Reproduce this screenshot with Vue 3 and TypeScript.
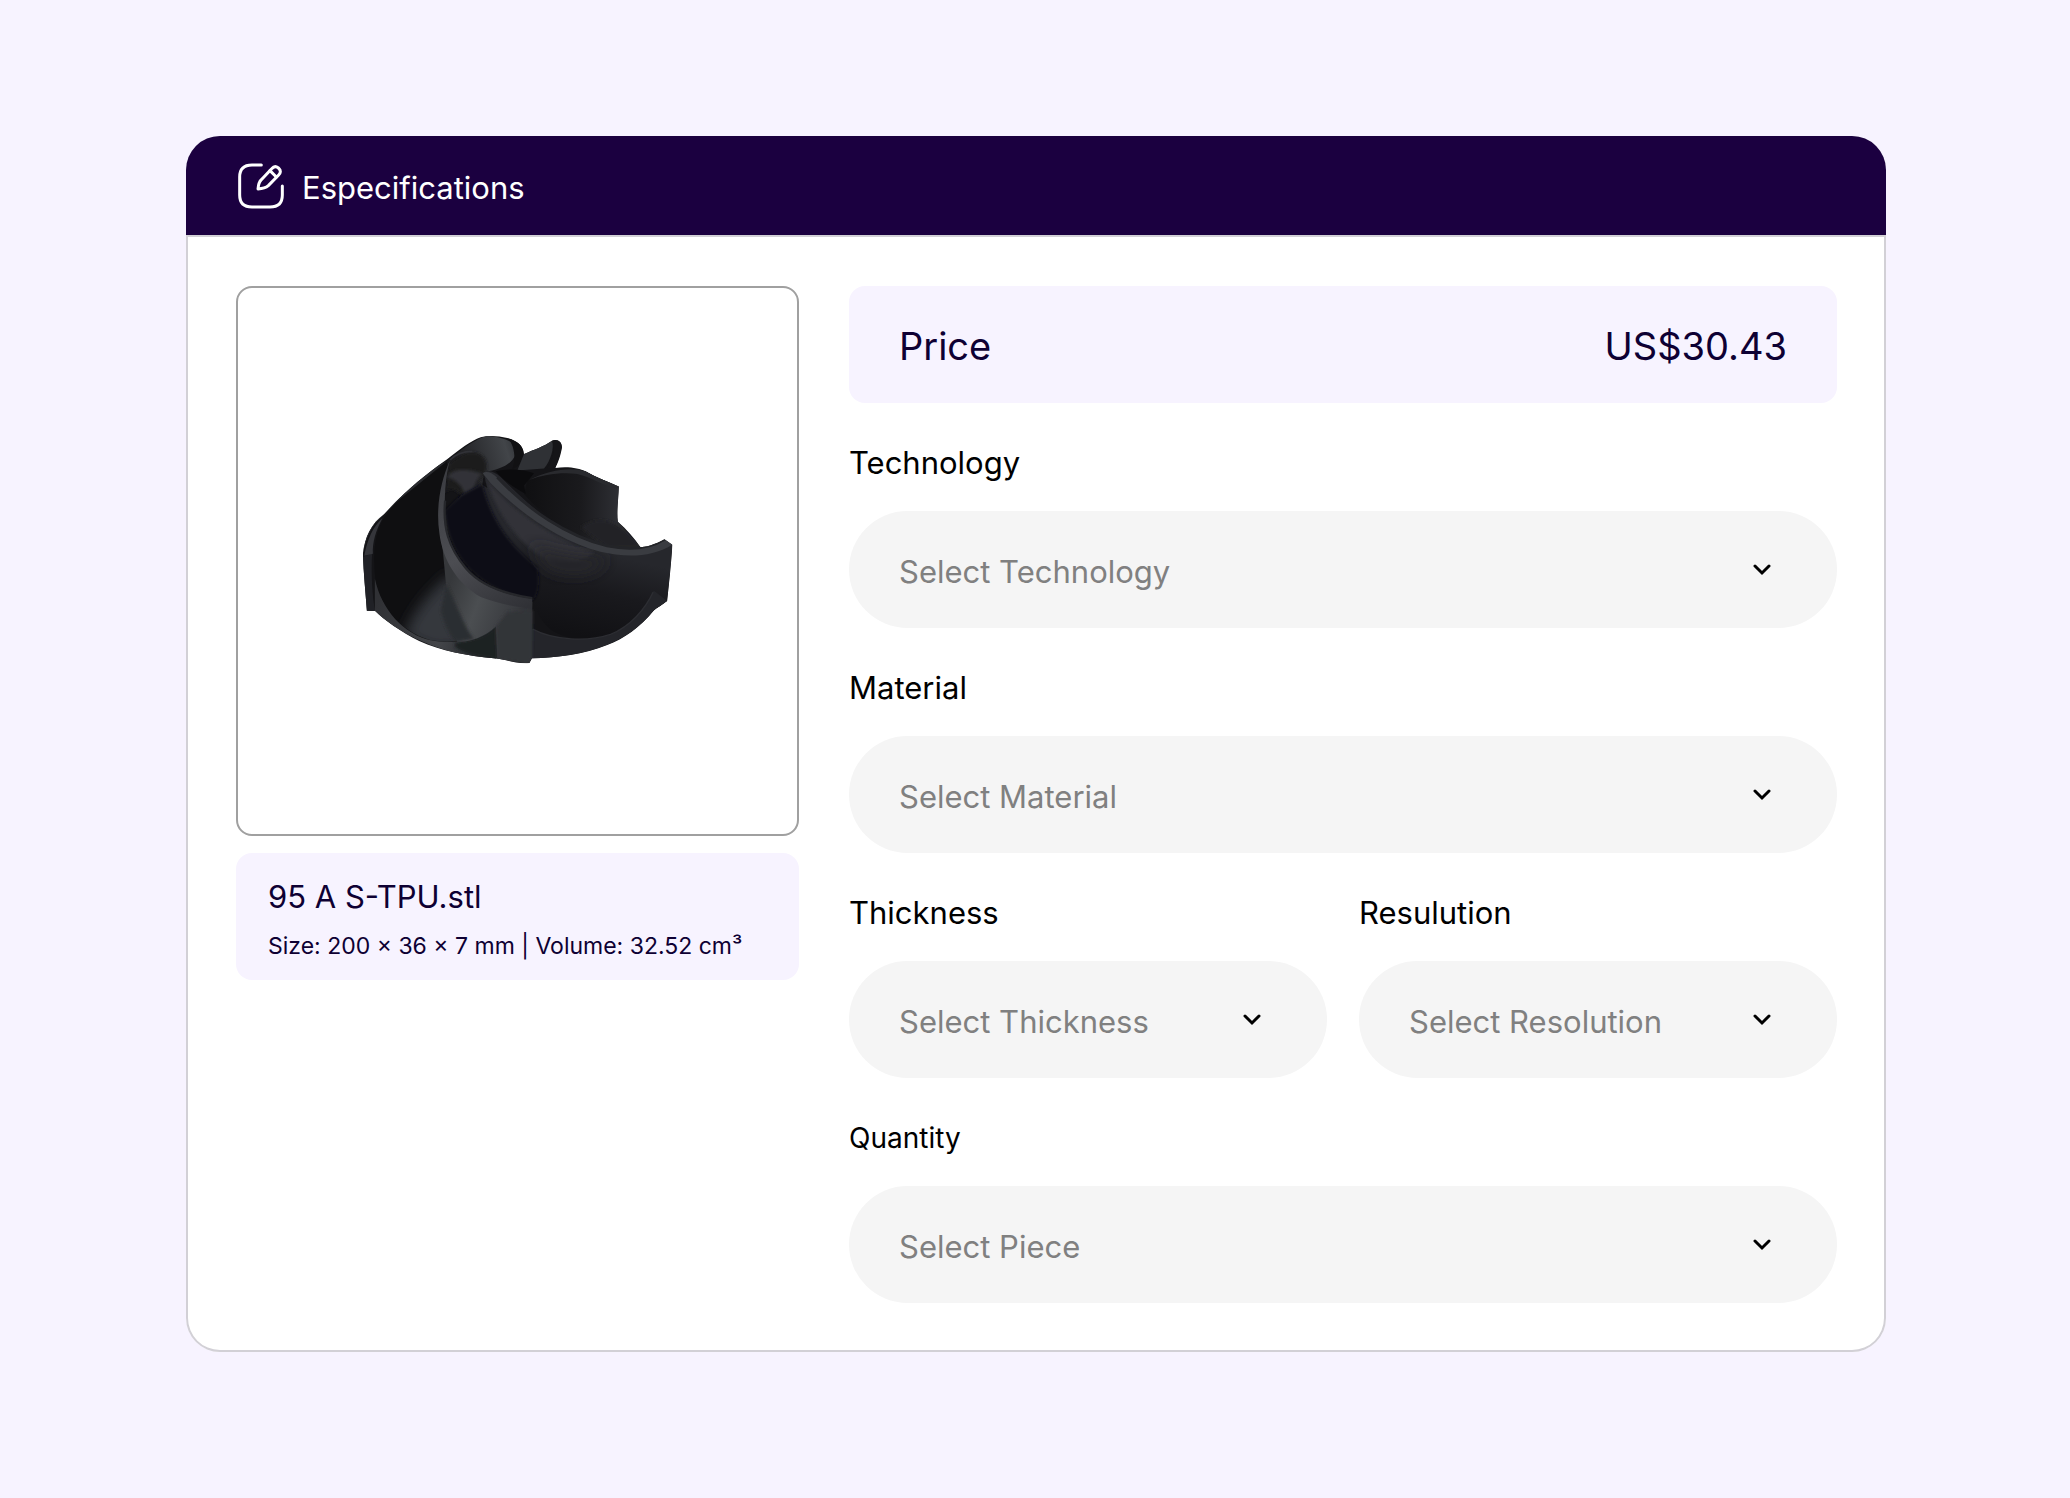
<script setup lang="ts">
import { reactive } from 'vue'

interface Field {
  id: string
  label: string
  placeholder: string
  options: string[]
  half?: boolean
  compact?: boolean
}

const fields: Field[] = [
  { id: 'technology', label: 'Technology', placeholder: 'Select Technology', options: ['FDM', 'SLA', 'SLS'] },
  { id: 'material', label: 'Material', placeholder: 'Select Material', options: ['TPU', 'PLA', 'Nylon'] },
  { id: 'thickness', label: 'Thickness', placeholder: 'Select Thickness', options: ['0.1 mm', '0.2 mm'], half: true },
  { id: 'resolution', label: 'Resulution', placeholder: 'Select Resolution', options: ['Standard', 'High'], half: true },
  { id: 'quantity', label: 'Quantity', placeholder: 'Select Piece', options: ['1', '2', '5', '10'], compact: true },
]

const values = reactive<Record<string, string>>({
  technology: '',
  material: '',
  thickness: '',
  resolution: '',
  quantity: '',
})
</script>

<template>
  <main class="page">
    <section class="card">
      <header class="card-header">
        <svg class="edit-icon" viewBox="0 0 138 138" aria-hidden="true">
          <g fill="none" stroke="currentColor" stroke-width="9" stroke-linecap="round" stroke-linejoin="round">
            <path d="M70 6H42C18 6 5 18 5 42V96C5 120 18 132 42 132H96C120 132 133 120 133 96V69" />
            <path d="M60 78C61 65 64 56 70 50L101 17C107 10 114 9 120 14L123 17C129 23 128 30 122 36L91 68C84 74 74 77 60 78Z" />
            <path d="M96 23L115 42" />
          </g>
        </svg>
        <h1 class="card-title">Especifications</h1>
      </header>

      <div class="card-body">
        <aside class="model">
          <div class="preview">
            <svg class="impeller" viewBox="64 70 936 694" role="img" aria-label="Black impeller part">
              <defs>
                <linearGradient id="wall" x1="310" y1="560" x2="580" y2="660" gradientUnits="userSpaceOnUse">
                  <stop offset="0" stop-color="#36383b" />
                  <stop offset=".35" stop-color="#4b4e51" />
                  <stop offset=".7" stop-color="#3b3d41" />
                  <stop offset="1" stop-color="#2b2c30" />
                </linearGradient>
                <linearGradient id="rim" x1="320" y1="150" x2="560" y2="590" gradientUnits="userSpaceOnUse">
                  <stop offset="0" stop-color="#3a3b40" />
                  <stop offset=".55" stop-color="#4c4d52" />
                  <stop offset="1" stop-color="#303136" />
                </linearGradient>
                <linearGradient id="top" x1="350" y1="180" x2="540" y2="120" gradientUnits="userSpaceOnUse">
                  <stop offset="0" stop-color="#1d1d20" />
                  <stop offset=".8" stop-color="#424549" />
                  <stop offset="1" stop-color="#303236" />
                </linearGradient>
                <linearGradient id="pocket" x1="800" y1="430" x2="740" y2="680" gradientUnits="userSpaceOnUse">
                  <stop offset="0" stop-color="#26272c" />
                  <stop offset=".45" stop-color="#19191d" />
                  <stop offset="1" stop-color="#111114" />
                </linearGradient>
                <linearGradient id="back" x1="560" y1="270" x2="830" y2="280" gradientUnits="userSpaceOnUse">
                  <stop offset="0" stop-color="#101012" />
                  <stop offset=".6" stop-color="#1a1a1d" />
                  <stop offset="1" stop-color="#2d2e33" />
                </linearGradient>
                <linearGradient id="base" x1="100" y1="600" x2="470" y2="730" gradientUnits="userSpaceOnUse">
                  <stop offset="0" stop-color="#303135" />
                  <stop offset=".55" stop-color="#434549" />
                  <stop offset="1" stop-color="#1e1f23" />
                </linearGradient>
                <filter id="soft" x="-30%" y="-30%" width="160%" height="160%">
                  <feGaussianBlur stdDeviation="20" />
                </filter>
                <filter id="edge" x="-10%" y="-10%" width="120%" height="120%">
                  <feGaussianBlur stdDeviation="5" />
                </filter>
                <clipPath id="body">
                  <path d="M66 430C72 380 90 340 130 310C200 235 250 195 320 145C360 115 390 90 420 80C440 74 470 74 500 82C530 90 548 104 550 130C580 116 610 108 634 90C652 84 664 94 664 110C660 140 650 160 644 172C680 166 715 172 735 182C765 200 800 212 835 228C834 265 828 300 832 334C858 356 880 382 900 410C930 408 955 395 972 386L996 403C992 460 986 520 980 572C965 584 950 592 940 600C900 650 850 685 800 704C730 732 650 742 574 744L566 758C530 762 500 748 460 744C380 736 300 722 235 692C180 664 130 630 103 602L78 601C74 545 68 490 66 430Z" />
                </clipPath>
                <clipPath id="bowl">
                  <path d="M320 150C250 195 190 245 130 320C100 370 95 430 104 510C118 580 170 660 270 690C340 702 410 690 465 650L400 520L300 400Z" />
                </clipPath>
              </defs>
              <g clip-path="url(#body)">
                <rect x="60" y="70" width="940" height="700" fill="#141417" />
                <!-- left bowl -->
                <g clip-path="url(#bowl)">
                  <rect x="60" y="130" width="420" height="580" fill="#0f0f11" />
                  <path d="M190 680C210 610 270 540 330 490L430 620L400 710L280 720Z" fill="#36383c" filter="url(#soft)" />
                </g>
                <path d="M66 435C76 370 100 335 135 300L320 150L250 185L130 290C90 335 70 380 66 435Z" fill="#292a2e" />
                <path d="M64 440L94 428C90 480 94 560 103 603H72Z" fill="#202126" />
                <path d="M70 436C80 385 95 350 125 322C105 360 94 395 96 430Z" fill="#35363b" />
                <path d="M102 505C122 600 190 672 270 690C340 704 420 690 468 645L466 750C330 735 200 690 102 604Z" fill="url(#base)" />
                <path d="M468 645C440 674 400 690 350 694C320 710 370 735 470 746Z" fill="#1f2024" filter="url(#edge)" />
                <!-- hub and rear fins -->
                <path d="M320 150C370 110 410 82 440 76C500 80 535 100 526 130C510 165 480 175 430 185L425 220L375 265L320 220Z" fill="url(#top)" />
                <path d="M325 160C360 125 400 115 425 135C445 155 440 185 425 200L375 262C350 245 330 220 312 250Z" fill="#1a1a1d" filter="url(#edge)" />
                <path d="M318 200C345 205 370 230 375 262C400 250 400 210 425 190C400 180 340 165 318 200Z" fill="#303237" filter="url(#edge)" />
                <path d="M500 82C535 90 552 110 548 135C540 160 530 170 515 175C528 145 520 100 500 82Z" fill="#111113" />
                <path d="M550 130L634 90C642 110 630 150 610 174L530 180Z" fill="#2f3135" />
                <path d="M634 88C652 82 666 96 664 112L644 174H620C640 145 645 110 634 88Z" fill="#151518" />
                <path d="M560 210C620 178 690 165 735 182L835 228C834 270 828 300 832 334L900 410L800 412C700 375 620 330 550 250Z" fill="url(#back)" />
                <path d="M720 350C780 310 830 325 900 410L800 410Z" fill="#222327" filter="url(#edge)" />
                <path d="M565 208C625 178 690 168 735 182L835 228L828 234C785 225 755 200 710 190C660 184 610 192 565 208Z" fill="#292a2e" />
                <path d="M465 182C510 172 550 178 580 188L550 225L555 250C520 230 490 212 465 182Z" fill="#0b0b0d" />
                <!-- large front blade -->
                <path d="M428 186C440 178 460 180 480 200C560 280 680 390 800 412C860 425 940 432 996 403C992 460 986 520 980 572L940 600C880 665 800 690 720 686C650 680 600 660 574 560C430 530 330 440 312 320L360 255L420 220L440 232Z" fill="url(#pocket)" />
                <path d="M312 300L360 255L425 220C450 320 500 400 590 470C600 520 590 560 575 570C430 540 320 450 312 300Z" fill="#101012" filter="url(#edge)" />
                <path d="M438 205C490 280 620 380 760 425C730 460 640 470 590 430C520 380 460 290 438 205Z" fill="#313338" filter="url(#edge)" />
                <path d="M570 400C640 430 720 440 800 440C780 500 680 510 610 470Z" fill="#26272c" filter="url(#soft)" />
                <path d="M426 188C436 180 452 184 468 200C560 300 680 380 800 408C870 424 940 412 974 386L996 403C930 444 850 440 780 424C650 390 530 300 450 218Z" fill="#3a3c41" />
                <path d="M470 200C560 296 680 378 800 406C870 420 930 412 972 386" fill="none" stroke="#232428" stroke-width="9" />
                <!-- lower ring -->
                <path d="M574 655C640 690 740 695 810 672C870 650 920 590 940 540L980 572L940 600C870 690 760 735 574 748Z" fill="#24252a" />
                <path d="M576 656C640 690 740 695 810 672C870 648 915 595 938 545" fill="none" stroke="#2c2d32" stroke-width="4" />
                <!-- near blade -->
                <path d="M304 400C330 470 390 540 470 560L575 575L574 744L566 760L470 746L466 648C430 680 390 694 350 694C320 620 315 500 304 400Z" fill="url(#wall)" />
                <path d="M300 600C310 640 330 690 350 694L400 686C370 650 340 560 316 520Z" fill="#2c2e31" filter="url(#edge)" />
                <path d="M466 648L500 605L575 600L574 744L566 760L470 746Z" fill="#333438" filter="url(#edge)" />
                <path d="M328 148C300 210 284 290 296 370C306 450 350 520 420 560C470 580 530 590 574 596L575 565C500 555 420 530 375 475C320 410 305 350 312 270C314 220 318 180 328 148Z" fill="url(#rim)" />
                <path d="M313 270C306 350 322 410 376 474C420 526 500 552 575 563" fill="none" stroke="#26272b" stroke-width="7" />
                <path d="M328 148C345 130 370 122 395 122" fill="none" stroke="#303136" stroke-width="5" />
              </g>
            </svg>
          </div>
          <div class="model-info">
            <p class="model-name">95 A S-TPU.stl</p>
            <p class="model-size">Size: 200 × 36 × 7 mm | Volume: 32.52 cm³</p>
          </div>
        </aside>

        <form class="options" @submit.prevent>
          <div class="price">
            <span>Price</span>
            <output>US$30.43</output>
          </div>
          <div v-for="field in fields" :key="field.id" class="field" :class="{ half: field.half }">
            <label class="field-label" :class="{ compact: field.compact }" :for="field.id">{{ field.label }}</label>
            <div class="select-wrap">
              <select :id="field.id" v-model="values[field.id]" class="select">
                <option value="" disabled>{{ field.placeholder }}</option>
                <option v-for="option in field.options" :key="option" :value="option">{{ option }}</option>
              </select>
              <svg class="chevron" viewBox="0 0 18 12" aria-hidden="true">
                <path d="M2 2L9 9L16 2" fill="none" stroke="currentColor" stroke-width="3" stroke-linecap="round" />
              </svg>
            </div>
          </div>
        </form>
      </div>
    </section>
  </main>
</template>

<style>
body {
  margin: 0;
  background: #f7f3ff;
}
</style>

<style scoped>
.page {
  box-sizing: border-box;
  min-height: 100vh;
  padding: 136px 184px 144px 186px;
  background: #f7f3ff;
  color: #0e0033;
  font-family: Inter, "Liberation Sans", sans-serif;
  font-size: 31px;
  line-height: 40px;
}

.card {
  overflow: hidden;
  border-radius: 34px;
  background: #fff;
  box-shadow: inset 0 0 0 2px #d2d0d6;
}

.card-header {
  display: flex;
  align-items: center;
  gap: 18px;
  height: 99px;
  padding: 0 52px;
  border-bottom: 2px solid #d2d0d6;
  background: #1b0040;
  background-clip: padding-box;
  color: #fff;
}

.edit-icon {
  width: 46px;
  height: 46px;
}

.card-title {
  margin: 0;
  padding-top: 4px;
  font-size: 31px;
  font-weight: 400;
}

.card-body {
  display: grid;
  grid-template-columns: 563fr 988fr;
  align-items: start;
  gap: 50px;
  padding: 49px 49px 49px 50px;
}

.preview {
  box-sizing: border-box;
  display: flex;
  align-items: center;
  justify-content: center;
  height: 550px;
  padding-bottom: 24px;
  border: 2px solid #a0a0a0;
  border-radius: 16px;
}

.impeller {
  width: 312px;
  height: 231px;
}

.model-info {
  margin-top: 17px;
  padding: 24px 32px 14px;
  border-radius: 16px;
  background: #f7f3ff;
}

.model-name,
.model-size {
  margin: 0;
}

.model-size {
  padding-top: 9px;
  font-size: 23px;
}

.options {
  display: grid;
  grid-template-columns: 1fr 1fr;
  column-gap: 32px;
}

.price {
  box-sizing: border-box;
  grid-column: 1 / -1;
  display: flex;
  align-items: center;
  justify-content: space-between;
  height: 117px;
  padding: 3px 50px 0;
  border-radius: 16px;
  background: #f7f3ff;
  font-size: 38px;
}

.field {
  grid-column: 1 / -1;
  display: flex;
  flex-direction: column;
  padding-top: 40px;
}

.field.half {
  grid-column: auto;
}

.field-label {
  margin-bottom: 28px;
  color: #000;
}

.field-label.compact {
  font-size: 28px;
}

.select-wrap {
  display: grid;
  align-items: center;
}

.select {
  grid-area: 1 / 1;
  width: 100%;
  height: 117px;
  padding: 4px 96px 0 50px;
  border: 0;
  border-radius: 59px;
  background: #f5f5f5;
  color: #808080;
  font: inherit;
  appearance: none;
}

.chevron {
  grid-area: 1 / 1;
  justify-self: end;
  width: 18px;
  height: 12px;
  margin-right: 66px;
  color: #000;
  pointer-events: none;
}
</style>
